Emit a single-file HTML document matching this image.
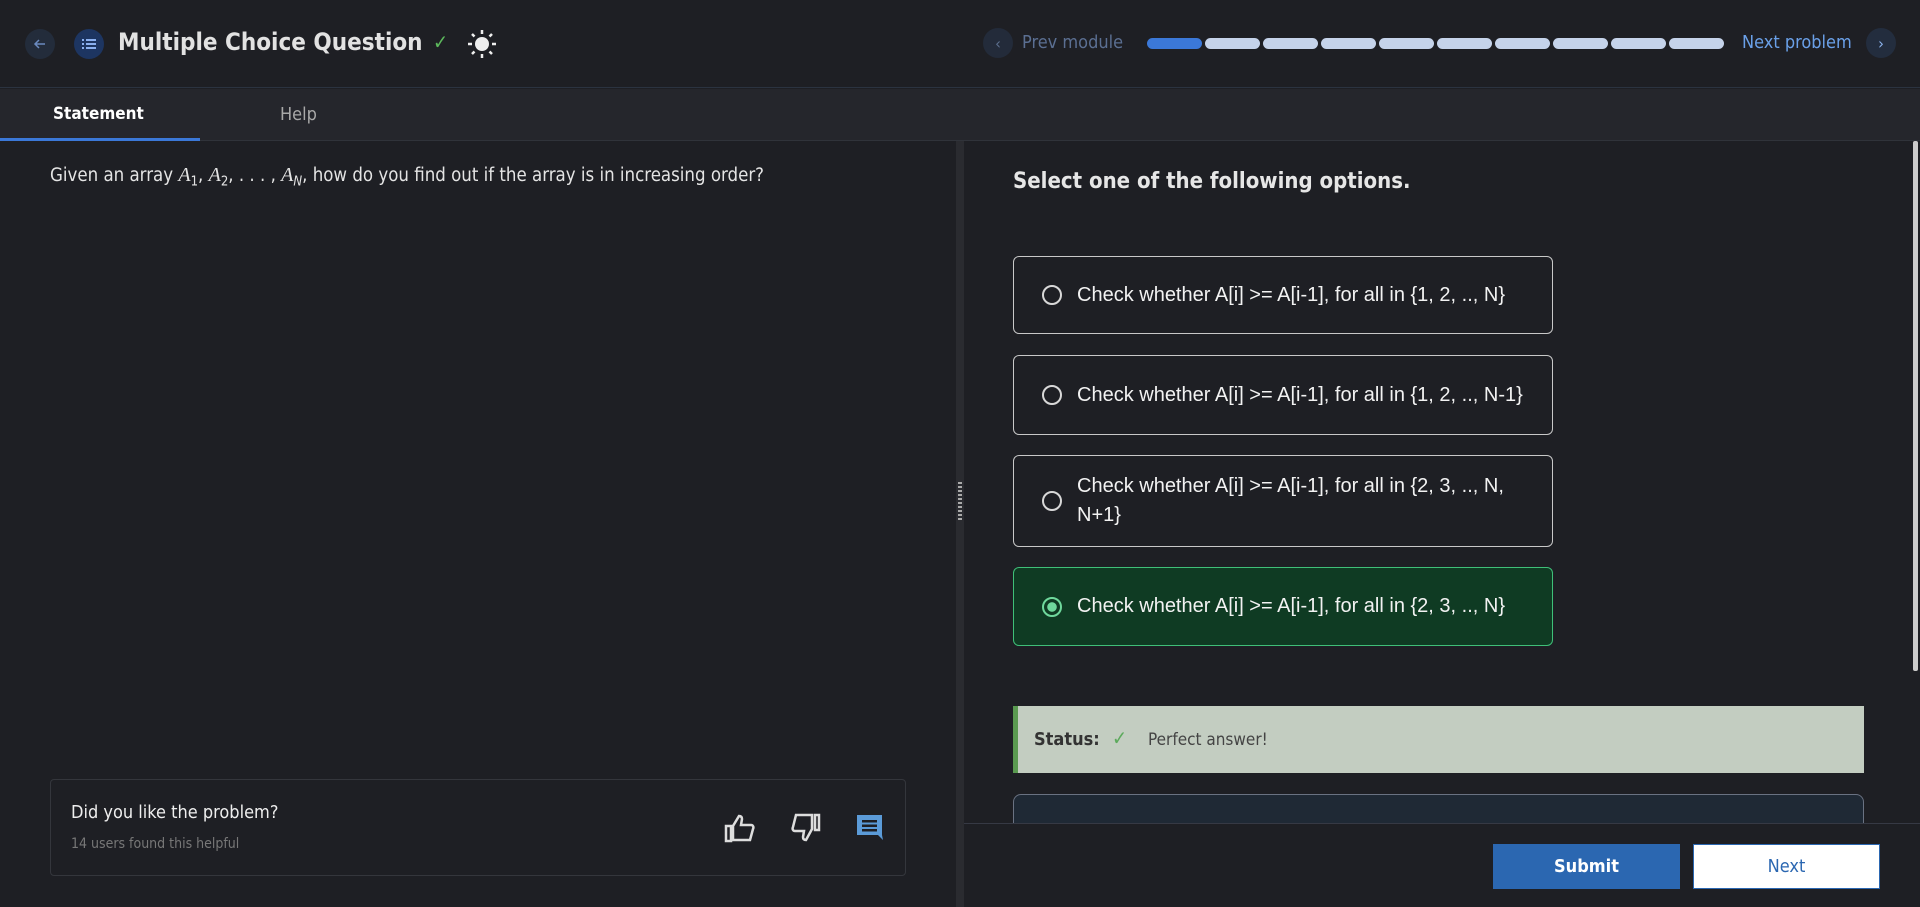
<!DOCTYPE html>
<html><head><meta charset="utf-8"><style>
*{box-sizing:border-box;margin:0;padding:0}
body{width:1920px;height:907px;background:#1e1f24;font-family:"DejaVu Sans Condensed","Liberation Sans",sans-serif;color:#e6e6e6;position:relative;overflow:hidden}
.abs{position:absolute}
.circ{position:absolute;border-radius:50%;display:flex;align-items:center;justify-content:center}
.opt{position:absolute;left:1013px;width:540px;border:1px solid #c8c8c8;border-radius:6px;font-family:"Liberation Sans",sans-serif;font-size:20px;color:#f2f2f2;display:flex;align-items:center;padding-left:63px;padding-right:10px;line-height:29px}
.radio{position:absolute;left:28px;top:50%;margin-top:-10px;width:20px;height:20px;border:2px solid #d8d8d8;border-radius:50%}
.seg{position:absolute;top:38px;height:11px;width:55px;border-radius:6px;background:#c5d3ea}
</style></head><body>
<!-- header -->
<div class="abs" style="left:0;top:0;width:1920px;height:88px;border-bottom:1px solid #2b3340;background:#1e1f24"></div>
<div class="circ" style="left:25px;top:29px;width:30px;height:30px;background:#232c3b"><svg width="14" height="14" viewBox="0 0 14 14"><path d="M12 7H2M6 3L2 7l4 4" stroke="#6b8ac0" stroke-width="1.5" fill="none"/></svg></div>
<div class="circ" style="left:74px;top:29px;width:30px;height:30px;background:#1d3561"><svg width="14" height="12" viewBox="0 0 14 12"><g fill="#8ab0f0"><rect x="0" y="1" width="2" height="2"/><rect x="0" y="5" width="2" height="2"/><rect x="0" y="9" width="2" height="2"/><rect x="4" y="1" width="10" height="2"/><rect x="4" y="5" width="10" height="2"/><rect x="4" y="9" width="10" height="2"/></g></svg></div>
<div class="abs" style="left:118px;top:28px;font-size:24px;font-weight:600;color:#e2e2e2">Multiple Choice Question</div>
<div class="abs" style="left:433px;top:30px;font-size:20px;color:#5cb85c">✓</div>
<svg class="abs" style="left:466px;top:28px" width="32" height="32" viewBox="0 0 32 32"><circle cx="16" cy="16" r="7" fill="#eee"/><g stroke="#eee" stroke-width="2.5"><path d="M16 2v4M16 26v4M2 16h4M26 16h4M6 6l2.5 2.5M23.5 23.5L26 26M6 26l2.5-2.5M23.5 8.5L26 6"/></g></svg>
<div class="circ" style="left:983px;top:28px;width:30px;height:30px;background:#232b3a;color:#5d708f;font-size:16px">‹</div>
<div class="abs" style="left:1022px;top:32px;font-size:18px;color:#5b6f92">Prev module</div>
<div class="seg" style="left:1147px;background:#3b78d8"></div>
<div class="seg" style="left:1205px"></div><div class="seg" style="left:1263px"></div><div class="seg" style="left:1321px"></div><div class="seg" style="left:1379px"></div><div class="seg" style="left:1437px"></div><div class="seg" style="left:1495px"></div><div class="seg" style="left:1553px"></div><div class="seg" style="left:1611px"></div><div class="seg" style="left:1669px"></div>
<div class="abs" style="left:1742px;top:32px;font-size:18px;color:#6aa0e8">Next problem</div>
<div class="circ" style="left:1866px;top:28px;width:30px;height:30px;background:#232d3e;color:#8cb3ee;font-size:16px">›</div>
<!-- tabs -->
<div class="abs" style="left:0;top:89px;width:1920px;height:52px;background:#25262c;border-bottom:1px solid #30333a"></div>
<div class="abs" style="left:53px;top:104px;font-size:17px;font-weight:600;color:#fff">Statement</div>
<div class="abs" style="left:0;top:138px;width:200px;height:3px;background:#3b78d8"></div>
<div class="abs" style="left:280px;top:104px;font-size:18px;color:#a8a8a8">Help</div>
<!-- left -->
<div class="abs" style="left:50px;top:164px;font-size:18.5px;color:#e4e4e4">Given an array <i style="font-family:'Liberation Serif',serif;font-size:20px">A</i><sub style="font-size:13px">1</sub>, <i style="font-family:'Liberation Serif',serif;font-size:20px">A</i><sub style="font-size:13px">2</sub>, . . . , <i style="font-family:'Liberation Serif',serif;font-size:20px">A</i><sub style="font-size:13px;font-style:italic">N</sub>, how do you find out if the array is in increasing order?</div>
<div class="abs" style="left:50px;top:779px;width:856px;height:97px;border:1px solid #34363c;border-radius:4px"></div>
<div class="abs" style="left:71px;top:802px;font-size:18px;color:#eee">Did you like the problem?</div>
<div class="abs" style="left:71px;top:836px;font-size:14px;color:#777">14 users found this helpful</div>
<svg class="abs" style="left:724px;top:813px" width="32" height="30" viewBox="0 0 32 30"><path d="M2 13h5v15H2zM9 13l6-10c2 0 3 1 3 3l-1 6h10c2 0 3 2 2 4l-3 11H9z" fill="none" stroke="#ddd" stroke-width="2.5"/></svg>
<svg class="abs" style="left:790px;top:813px" width="32" height="30" viewBox="0 0 32 30"><path d="M25 2h4v15h-4zM22 2v14l-6 11c-2 0-3-1-3-3l1-6H5c-2 0-3-2-2-4l3-12z" fill="none" stroke="#ddd" stroke-width="2.5"/></svg>
<svg class="abs" style="left:856px;top:814px" width="28" height="28" viewBox="0 0 28 28"><path d="M1 1h25v20l1 5-5-5H1z" fill="#5b9bd8"/><g fill="#1e1f24"><rect x="6" y="6" width="15" height="2.5"/><rect x="6" y="10.5" width="15" height="2.5"/><rect x="6" y="15" width="15" height="2.5"/></g></svg>
<!-- divider -->
<div class="abs" style="left:956px;top:141px;width:8px;height:766px;background:#2a2b30"></div>
<div class="abs" style="left:958px;top:482px;width:4px;height:38px;background:repeating-linear-gradient(#aaa 0 2px,transparent 2px 4px)"></div>
<!-- right -->
<div class="abs" style="left:1013px;top:169px;font-size:22px;font-weight:600;color:#e6e6e6">Select one of the following options.</div>
<div class="opt" style="top:256px;height:78px"><span class="radio"></span>Check whether A[i] &gt;= A[i-1], for all in {1, 2, .., N}</div>
<div class="opt" style="top:355px;height:80px"><span class="radio"></span>Check whether A[i] &gt;= A[i-1], for all in {1, 2, .., N-1}</div>
<div class="opt" style="top:455px;height:92px"><span class="radio"></span>Check whether A[i] &gt;= A[i-1], for all in {2, 3, .., N, N+1}</div>
<div class="opt" style="top:567px;height:79px;background:#0f3b23;border-color:#3fbf78"><span class="radio" style="border-color:#6fd89c;background:radial-gradient(circle,#6fd89c 0 4.5px,transparent 5px)"></span>Check whether A[i] &gt;= A[i-1], for all in {2, 3, .., N}</div>
<div class="abs" style="left:1013px;top:706px;width:851px;height:67px;background:#c3cdc1;border-left:5px solid #5a9a50"></div>
<div class="abs" style="left:1034px;top:729px;font-size:18px;font-weight:600;color:#333">Status:</div>
<div class="abs" style="left:1112px;top:726px;font-size:20px;font-weight:bold;color:#5caa5c">✓</div>
<div class="abs" style="left:1148px;top:730px;font-size:17px;color:#444">Perfect answer!</div>
<div class="abs" style="left:1013px;top:794px;width:851px;height:60px;background:#1f2935;border:1px solid #6a7282;border-radius:8px"></div>
<div class="abs" style="left:1913px;top:141px;width:5px;height:530px;background:#ccc;border-radius:2px"></div>
<!-- footer -->
<div class="abs" style="left:964px;top:823px;width:956px;height:84px;background:#1e1f24;border-top:1px solid #363944"></div>
<div class="abs" style="left:1493px;top:844px;width:187px;height:45px;background:#2b67b1;color:#fff;font-size:18px;font-weight:600;display:flex;align-items:center;justify-content:center">Submit</div>
<div class="abs" style="left:1693px;top:844px;width:187px;height:45px;background:#fff;border:1px solid #2b67b1;color:#2b67b1;font-size:18px;display:flex;align-items:center;justify-content:center">Next</div>
</body></html>
